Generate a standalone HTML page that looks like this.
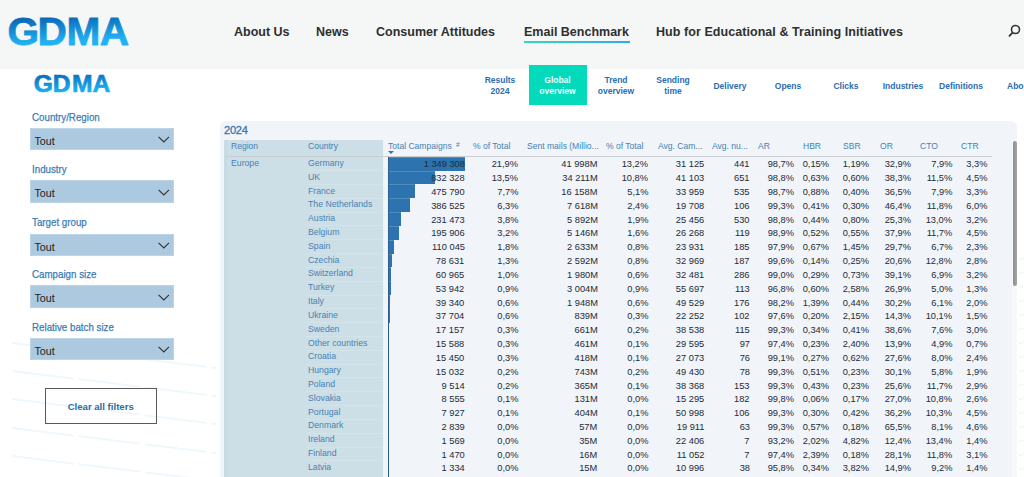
<!DOCTYPE html>
<html><head><meta charset="utf-8"><title>GDMA Email Benchmark</title>
<style>
html,body{margin:0;padding:0}
body{width:1024px;height:477px;overflow:hidden;position:relative;background:#fff;font-family:"Liberation Sans",sans-serif}
.abs,.th,.v,.ct,.bar,.flabel,.dd,.tab,.nav{position:absolute}
#hdr{position:absolute;left:0;top:0;width:1024px;height:68.6px;background:#f5f6f6}
.nav{top:25px;font-weight:bold;font-size:12.5px;color:#2f2f2f;white-space:nowrap;line-height:15px}
.logo{position:absolute;font-weight:bold;white-space:nowrap}
.tab{font-weight:bold;font-size:8.5px;line-height:10.6px;color:#2b6db1;text-align:center;white-space:nowrap}
#panel{position:absolute;left:219.9px;top:120.7px;width:797.1px;height:370px;background:#f1f4f8;border-radius:6px}
#rc{position:absolute;left:223.6px;top:139.9px;width:159.5px;border-right:1px solid #eef3f7;height:340px;background:linear-gradient(90deg,#c8dbe4 0,#c8dbe4 3px,#cddfe6 4px)}
.th{top:138.7px;font-size:8.55px;line-height:14px;color:#4682b4;white-space:nowrap}
.v{font-size:9.9px;line-height:13.8px;margin-top:0.8px;transform:scaleX(0.94);transform-origin:100% 50%;color:#222c38;white-space:nowrap;text-align:right}
.ct{left:308px;font-size:8.7px;line-height:12px;margin-top:0.3px;color:#4682b4;white-space:nowrap}
.bar{left:388px;height:13.82px;background:#2c73af;box-sizing:border-box;border-top:0.5px solid rgba(255,255,255,0.18)}
.flabel{left:32px;font-size:11px;line-height:12px;color:#3b7bb3;-webkit-text-stroke:0.25px #3b7bb3;transform:scaleX(0.887);transform-origin:0 50%;white-space:nowrap}
.dd{left:29.7px;width:144.2px;height:22.5px;background:#adc9e0;box-sizing:border-box;border:1px solid #bdd4e6}
.dd span{position:absolute;left:3.8px;top:5px;font-size:10.7px;line-height:15px;color:#222}
.dd svg{position:absolute;left:127.6px;top:7.2px}
</style></head><body>
<div id="hdr"></div>
<svg class="abs" style="left:0;top:0" width="1024" height="477"><g fill="none" stroke="#edf7fc" stroke-width="1.8" stroke-dasharray="62 5"><path d="M12 343 L216 368"/><path d="M12 371 L216 396"/><path d="M12 399 L216 424"/><path d="M12 428 L216 453"/><path d="M12 456 L216 481"/><path d="M1019 259.5 L1024 258"/><path d="M1019 273.5 L1024 272"/><path d="M1019 287.5 L1024 286"/><path d="M1019 301.5 L1024 300"/><path d="M1019 315.5 L1024 314"/><path d="M1019 329.5 L1024 328"/><path d="M1019 343.5 L1024 342"/><path d="M1019 357.5 L1024 356"/><path d="M1019 371.5 L1024 370"/><path d="M1019 385.5 L1024 384"/><path d="M1019 399.5 L1024 398"/><path d="M1019 413.5 L1024 412"/><path d="M1019 427.5 L1024 426"/><path d="M1019 441.5 L1024 440"/><path d="M1019 455.5 L1024 454"/><path d="M1019 469.5 L1024 468"/></g></svg>
<svg class="abs" style="left:0;top:0;overflow:visible" width="131" height="49"><defs><linearGradient id="lg1" x1="0" y1="0" x2="0.15" y2="1"><stop offset="0.24" stop-color="#0a69b9"/><stop offset="0.8" stop-color="#1fb2f2"/></linearGradient></defs><text font-family="Liberation Sans, sans-serif" font-weight="bold" font-size="38.70" fill="url(#lg1)" stroke="url(#lg1)" stroke-width="0.8" stroke-linejoin="round" transform="translate(0,44.60) scale(1.05,1)" x="7.06 35.68 63.37 95.12" y="0">GDMA</text></svg>
<div class="nav" style="left:234px">About Us</div>
<div class="nav" style="left:316px">News</div>
<div class="nav" style="left:376px">Consumer Attitudes</div>
<div class="nav" style="left:524px">Email Benchmark</div>
<div class="abs" style="left:524px;top:41.2px;width:105.5px;height:1.7px;background:linear-gradient(90deg,#36d8b8,#2eaaf4)"></div>
<div class="nav" style="left:656px;letter-spacing:0.06px">Hub for Educational &amp; Training Initiatives</div>
<svg class="abs" style="left:1006px;top:23px" width="16" height="16" viewBox="0 0 16 16"><circle cx="9.5" cy="6.5" r="4" fill="none" stroke="#333" stroke-width="1.6"/><path d="M6.6 9.6 L3 13.4" stroke="#333" stroke-width="1.8" fill="none"/></svg>

<svg class="abs" style="left:0;top:0;overflow:visible" width="112" height="97"><defs><linearGradient id="lg2" x1="0" y1="0" x2="0.15" y2="1"><stop offset="0.24" stop-color="#0b72c2"/><stop offset="0.8" stop-color="#19aef0"/></linearGradient></defs><text font-family="Liberation Sans, sans-serif" font-weight="bold" font-size="24.64" fill="url(#lg2)" stroke="url(#lg2)" stroke-width="0.7" stroke-linejoin="round" transform="translate(0,92.35) scale(1.0,1)" x="33.80 52.82 71.88 92.53" y="0">GDMA</text></svg>

<div class="abs" style="left:528.8px;top:64.8px;width:58px;height:40.1px;background:#02dabb"></div>
<div class="tab" style="left:470px;width:60px;top:75.1px">Results<br>2024</div>
<div class="tab" style="left:528.5px;width:58px;top:75.1px;color:#e8fffa">Global<br>overview</div>
<div class="tab" style="left:586px;width:60px;top:75.1px">Trend<br>overview</div>
<div class="tab" style="left:643px;width:60px;top:75.1px">Sending<br>time</div>
<div class="tab" style="left:700px;width:60px;top:80.8px">Delivery</div>
<div class="tab" style="left:758px;width:60px;top:80.8px">Opens</div>
<div class="tab" style="left:816px;width:60px;top:80.8px">Clicks</div>
<div class="tab" style="left:873px;width:60px;top:80.8px">Industries</div>
<div class="tab" style="left:931px;width:60px;top:80.8px">Definitions</div>
<div class="tab" style="left:1007px;top:80.8px;text-align:left">About</div>

<div class="flabel" style="top:110.6px">Country/Region</div>
<div class="dd" style="top:128.1px;height:22.3px"><span>Tout</span><svg width="12" height="8" viewBox="0 0 12 8"><path d="M0.6 0.8 L5.8 6 L11 0.8" fill="none" stroke="#333" stroke-width="1.1"/></svg></div>
<div class="flabel" style="top:163.4px">Industry</div>
<div class="dd" style="top:180.4px;height:22.2px"><span>Tout</span><svg width="12" height="8" viewBox="0 0 12 8"><path d="M0.6 0.8 L5.8 6 L11 0.8" fill="none" stroke="#333" stroke-width="1.1"/></svg></div>
<div class="flabel" style="top:215.6px">Target group</div>
<div class="dd" style="top:233.7px;height:22.2px"><span>Tout</span><svg width="12" height="8" viewBox="0 0 12 8"><path d="M0.6 0.8 L5.8 6 L11 0.8" fill="none" stroke="#333" stroke-width="1.1"/></svg></div>
<div class="flabel" style="top:267.9px">Campaign size</div>
<div class="dd" style="top:285.4px;height:22.2px"><span>Tout</span><svg width="12" height="8" viewBox="0 0 12 8"><path d="M0.6 0.8 L5.8 6 L11 0.8" fill="none" stroke="#333" stroke-width="1.1"/></svg></div>
<div class="flabel" style="top:320.7px">Relative batch size</div>
<div class="dd" style="top:338.2px;height:22.2px"><span>Tout</span><svg width="12" height="8" viewBox="0 0 12 8"><path d="M0.6 0.8 L5.8 6 L11 0.8" fill="none" stroke="#333" stroke-width="1.1"/></svg></div>
<div class="abs" style="left:44.5px;top:387.7px;width:112.4px;height:36.6px;box-sizing:border-box;border:1px solid #5a5a5a"></div>
<div class="tab" style="left:44.5px;width:112.4px;top:401px;font-size:9.6px;line-height:12px;color:#2b6cab">Clear all filters</div>

<div id="panel"></div>
<div class="abs" style="left:224px;top:123px;font-size:11.1px;line-height:14px;letter-spacing:-0.25px;color:#3877b2;-webkit-text-stroke:0.3px #3877b2">2024</div>
<div id="rc"></div>
<div class="abs" style="left:224.5px;top:156px;width:767.5px;height:1px;background:#c9cdd2"></div>
<div class="abs" style="left:231px;top:157.2px;font-size:8.7px;line-height:12px;color:#4682b4">Europe</div>
<div class="th" style="left:231px">Region</div>
<div class="th" style="left:308px">Country</div>
<div class="th" style="left:388px">Total Campaigns</div>
<div class="th" style="left:473px">% of Total</div>
<div class="th" style="left:527px">Sent mails (Millio...</div>
<div class="th" style="left:606px">% of Total</div>
<div class="th" style="left:658px">Avg. Cam...</div>
<div class="th" style="left:712px">Avg. nu...</div>
<div class="th" style="left:758px">AR</div>
<div class="th" style="left:803px">HBR</div>
<div class="th" style="left:843px">SBR</div>
<div class="th" style="left:880px">OR</div>
<div class="th" style="left:920px">CTO</div>
<div class="th" style="left:961px">CTR</div>
<div class="th hash" style="left:456px;font-size:6.5px;top:138px">#</div>
<div class="abs" style="left:388.2px;top:151.3px;width:0;height:0;border-left:3.1px solid transparent;border-right:3.1px solid transparent;border-top:3.4px solid #2e75b5"></div>
<div class="bar" style="top:156.80px;width:76.50px"></div>
<div class="ct" style="top:156.60px">Germany</div>
<div class="v" style="top:156.60px;right:559.5px">1 349 308</div>
<div class="v" style="top:156.60px;right:505.5px">21,9%</div>
<div class="v" style="top:156.60px;right:426.5px">41 998M</div>
<div class="v" style="top:156.60px;right:375.5px">13,2%</div>
<div class="v" style="top:156.60px;right:319.5px">31 125</div>
<div class="v" style="top:156.60px;right:274.5px">441</div>
<div class="v" style="top:156.60px;right:229.5px">98,7%</div>
<div class="v" style="top:156.60px;right:194.5px">0,15%</div>
<div class="v" style="top:156.60px;right:154.5px">1,19%</div>
<div class="v" style="top:156.60px;right:112.5px">32,9%</div>
<div class="v" style="top:156.60px;right:71.5px">7,9%</div>
<div class="v" style="top:156.60px;right:36.5px">3,3%</div>
<div class="bar" style="top:170.62px;width:47.19px"></div>
<div class="abs" style="left:306px;top:170.12px;width:77px;height:0.7px;background:rgba(255,255,255,0.13)"></div>
<div class="ct" style="top:170.42px">UK</div>
<div class="v" style="top:170.42px;right:559.5px">832 328</div>
<div class="v" style="top:170.42px;right:505.5px">13,5%</div>
<div class="v" style="top:170.42px;right:426.5px">34 211M</div>
<div class="v" style="top:170.42px;right:375.5px">10,8%</div>
<div class="v" style="top:170.42px;right:319.5px">41 103</div>
<div class="v" style="top:170.42px;right:274.5px">651</div>
<div class="v" style="top:170.42px;right:229.5px">98,8%</div>
<div class="v" style="top:170.42px;right:194.5px">0,63%</div>
<div class="v" style="top:170.42px;right:154.5px">0,60%</div>
<div class="v" style="top:170.42px;right:112.5px">38,3%</div>
<div class="v" style="top:170.42px;right:71.5px">11,5%</div>
<div class="v" style="top:170.42px;right:36.5px">4,5%</div>
<div class="bar" style="top:184.44px;width:26.98px"></div>
<div class="abs" style="left:306px;top:183.94px;width:77px;height:0.7px;background:rgba(255,255,255,0.13)"></div>
<div class="ct" style="top:184.24px">France</div>
<div class="v" style="top:184.24px;right:559.5px">475 790</div>
<div class="v" style="top:184.24px;right:505.5px">7,7%</div>
<div class="v" style="top:184.24px;right:426.5px">16 158M</div>
<div class="v" style="top:184.24px;right:375.5px">5,1%</div>
<div class="v" style="top:184.24px;right:319.5px">33 959</div>
<div class="v" style="top:184.24px;right:274.5px">535</div>
<div class="v" style="top:184.24px;right:229.5px">98,7%</div>
<div class="v" style="top:184.24px;right:194.5px">0,88%</div>
<div class="v" style="top:184.24px;right:154.5px">0,40%</div>
<div class="v" style="top:184.24px;right:112.5px">36,5%</div>
<div class="v" style="top:184.24px;right:71.5px">7,9%</div>
<div class="v" style="top:184.24px;right:36.5px">3,3%</div>
<div class="bar" style="top:198.26px;width:21.91px"></div>
<div class="abs" style="left:306px;top:197.76px;width:77px;height:0.7px;background:rgba(255,255,255,0.13)"></div>
<div class="ct" style="top:198.06px">The Netherlands</div>
<div class="v" style="top:198.06px;right:559.5px">386 525</div>
<div class="v" style="top:198.06px;right:505.5px">6,3%</div>
<div class="v" style="top:198.06px;right:426.5px">7 618M</div>
<div class="v" style="top:198.06px;right:375.5px">2,4%</div>
<div class="v" style="top:198.06px;right:319.5px">19 708</div>
<div class="v" style="top:198.06px;right:274.5px">106</div>
<div class="v" style="top:198.06px;right:229.5px">99,3%</div>
<div class="v" style="top:198.06px;right:194.5px">0,41%</div>
<div class="v" style="top:198.06px;right:154.5px">0,30%</div>
<div class="v" style="top:198.06px;right:112.5px">46,4%</div>
<div class="v" style="top:198.06px;right:71.5px">11,8%</div>
<div class="v" style="top:198.06px;right:36.5px">6,0%</div>
<div class="bar" style="top:212.08px;width:13.12px"></div>
<div class="abs" style="left:306px;top:211.58px;width:77px;height:0.7px;background:rgba(255,255,255,0.13)"></div>
<div class="ct" style="top:211.88px">Austria</div>
<div class="v" style="top:211.88px;right:559.5px">231 473</div>
<div class="v" style="top:211.88px;right:505.5px">3,8%</div>
<div class="v" style="top:211.88px;right:426.5px">5 892M</div>
<div class="v" style="top:211.88px;right:375.5px">1,9%</div>
<div class="v" style="top:211.88px;right:319.5px">25 456</div>
<div class="v" style="top:211.88px;right:274.5px">530</div>
<div class="v" style="top:211.88px;right:229.5px">98,8%</div>
<div class="v" style="top:211.88px;right:194.5px">0,44%</div>
<div class="v" style="top:211.88px;right:154.5px">0,80%</div>
<div class="v" style="top:211.88px;right:112.5px">25,3%</div>
<div class="v" style="top:211.88px;right:71.5px">13,0%</div>
<div class="v" style="top:211.88px;right:36.5px">3,2%</div>
<div class="bar" style="top:225.90px;width:11.11px"></div>
<div class="abs" style="left:306px;top:225.40px;width:77px;height:0.7px;background:rgba(255,255,255,0.13)"></div>
<div class="ct" style="top:225.70px">Belgium</div>
<div class="v" style="top:225.70px;right:559.5px">195 906</div>
<div class="v" style="top:225.70px;right:505.5px">3,2%</div>
<div class="v" style="top:225.70px;right:426.5px">5 146M</div>
<div class="v" style="top:225.70px;right:375.5px">1,6%</div>
<div class="v" style="top:225.70px;right:319.5px">26 268</div>
<div class="v" style="top:225.70px;right:274.5px">119</div>
<div class="v" style="top:225.70px;right:229.5px">98,9%</div>
<div class="v" style="top:225.70px;right:194.5px">0,52%</div>
<div class="v" style="top:225.70px;right:154.5px">0,55%</div>
<div class="v" style="top:225.70px;right:112.5px">37,9%</div>
<div class="v" style="top:225.70px;right:71.5px">11,7%</div>
<div class="v" style="top:225.70px;right:36.5px">4,5%</div>
<div class="bar" style="top:239.72px;width:6.24px"></div>
<div class="abs" style="left:306px;top:239.22px;width:77px;height:0.7px;background:rgba(255,255,255,0.13)"></div>
<div class="ct" style="top:239.52px">Spain</div>
<div class="v" style="top:239.52px;right:559.5px">110 045</div>
<div class="v" style="top:239.52px;right:505.5px">1,8%</div>
<div class="v" style="top:239.52px;right:426.5px">2 633M</div>
<div class="v" style="top:239.52px;right:375.5px">0,8%</div>
<div class="v" style="top:239.52px;right:319.5px">23 931</div>
<div class="v" style="top:239.52px;right:274.5px">185</div>
<div class="v" style="top:239.52px;right:229.5px">97,9%</div>
<div class="v" style="top:239.52px;right:194.5px">0,67%</div>
<div class="v" style="top:239.52px;right:154.5px">1,45%</div>
<div class="v" style="top:239.52px;right:112.5px">29,7%</div>
<div class="v" style="top:239.52px;right:71.5px">6,7%</div>
<div class="v" style="top:239.52px;right:36.5px">2,3%</div>
<div class="bar" style="top:253.54px;width:4.46px"></div>
<div class="abs" style="left:306px;top:253.04px;width:77px;height:0.7px;background:rgba(255,255,255,0.13)"></div>
<div class="ct" style="top:253.34px">Czechia</div>
<div class="v" style="top:253.34px;right:559.5px">78 631</div>
<div class="v" style="top:253.34px;right:505.5px">1,3%</div>
<div class="v" style="top:253.34px;right:426.5px">2 592M</div>
<div class="v" style="top:253.34px;right:375.5px">0,8%</div>
<div class="v" style="top:253.34px;right:319.5px">32 969</div>
<div class="v" style="top:253.34px;right:274.5px">187</div>
<div class="v" style="top:253.34px;right:229.5px">99,6%</div>
<div class="v" style="top:253.34px;right:194.5px">0,14%</div>
<div class="v" style="top:253.34px;right:154.5px">0,25%</div>
<div class="v" style="top:253.34px;right:112.5px">20,6%</div>
<div class="v" style="top:253.34px;right:71.5px">12,8%</div>
<div class="v" style="top:253.34px;right:36.5px">2,8%</div>
<div class="bar" style="top:267.36px;width:3.46px"></div>
<div class="abs" style="left:306px;top:266.86px;width:77px;height:0.7px;background:rgba(255,255,255,0.13)"></div>
<div class="ct" style="top:267.16px">Switzerland</div>
<div class="v" style="top:267.16px;right:559.5px">60 965</div>
<div class="v" style="top:267.16px;right:505.5px">1,0%</div>
<div class="v" style="top:267.16px;right:426.5px">1 980M</div>
<div class="v" style="top:267.16px;right:375.5px">0,6%</div>
<div class="v" style="top:267.16px;right:319.5px">32 481</div>
<div class="v" style="top:267.16px;right:274.5px">286</div>
<div class="v" style="top:267.16px;right:229.5px">99,0%</div>
<div class="v" style="top:267.16px;right:194.5px">0,29%</div>
<div class="v" style="top:267.16px;right:154.5px">0,73%</div>
<div class="v" style="top:267.16px;right:112.5px">39,1%</div>
<div class="v" style="top:267.16px;right:71.5px">6,9%</div>
<div class="v" style="top:267.16px;right:36.5px">3,2%</div>
<div class="bar" style="top:281.18px;width:3.06px"></div>
<div class="abs" style="left:306px;top:280.68px;width:77px;height:0.7px;background:rgba(255,255,255,0.13)"></div>
<div class="ct" style="top:280.98px">Turkey</div>
<div class="v" style="top:280.98px;right:559.5px">53 942</div>
<div class="v" style="top:280.98px;right:505.5px">0,9%</div>
<div class="v" style="top:280.98px;right:426.5px">3 004M</div>
<div class="v" style="top:280.98px;right:375.5px">0,9%</div>
<div class="v" style="top:280.98px;right:319.5px">55 697</div>
<div class="v" style="top:280.98px;right:274.5px">113</div>
<div class="v" style="top:280.98px;right:229.5px">96,8%</div>
<div class="v" style="top:280.98px;right:194.5px">0,60%</div>
<div class="v" style="top:280.98px;right:154.5px">2,58%</div>
<div class="v" style="top:280.98px;right:112.5px">26,9%</div>
<div class="v" style="top:280.98px;right:71.5px">5,0%</div>
<div class="v" style="top:280.98px;right:36.5px">1,3%</div>
<div class="bar" style="top:295.00px;width:2.23px"></div>
<div class="abs" style="left:306px;top:294.50px;width:77px;height:0.7px;background:rgba(255,255,255,0.13)"></div>
<div class="ct" style="top:294.80px">Italy</div>
<div class="v" style="top:294.80px;right:559.5px">39 340</div>
<div class="v" style="top:294.80px;right:505.5px">0,6%</div>
<div class="v" style="top:294.80px;right:426.5px">1 948M</div>
<div class="v" style="top:294.80px;right:375.5px">0,6%</div>
<div class="v" style="top:294.80px;right:319.5px">49 529</div>
<div class="v" style="top:294.80px;right:274.5px">176</div>
<div class="v" style="top:294.80px;right:229.5px">98,2%</div>
<div class="v" style="top:294.80px;right:194.5px">1,39%</div>
<div class="v" style="top:294.80px;right:154.5px">0,44%</div>
<div class="v" style="top:294.80px;right:112.5px">30,2%</div>
<div class="v" style="top:294.80px;right:71.5px">6,1%</div>
<div class="v" style="top:294.80px;right:36.5px">2,0%</div>
<div class="bar" style="top:308.82px;width:2.14px"></div>
<div class="abs" style="left:306px;top:308.32px;width:77px;height:0.7px;background:rgba(255,255,255,0.13)"></div>
<div class="ct" style="top:308.62px">Ukraine</div>
<div class="v" style="top:308.62px;right:559.5px">37 704</div>
<div class="v" style="top:308.62px;right:505.5px">0,6%</div>
<div class="v" style="top:308.62px;right:426.5px">839M</div>
<div class="v" style="top:308.62px;right:375.5px">0,3%</div>
<div class="v" style="top:308.62px;right:319.5px">22 252</div>
<div class="v" style="top:308.62px;right:274.5px">102</div>
<div class="v" style="top:308.62px;right:229.5px">97,6%</div>
<div class="v" style="top:308.62px;right:194.5px">0,20%</div>
<div class="v" style="top:308.62px;right:154.5px">2,15%</div>
<div class="v" style="top:308.62px;right:112.5px">14,3%</div>
<div class="v" style="top:308.62px;right:71.5px">10,1%</div>
<div class="v" style="top:308.62px;right:36.5px">1,5%</div>
<div class="bar" style="top:322.64px;width:0.97px"></div>
<div class="abs" style="left:306px;top:322.14px;width:77px;height:0.7px;background:rgba(255,255,255,0.13)"></div>
<div class="ct" style="top:322.44px">Sweden</div>
<div class="v" style="top:322.44px;right:559.5px">17 157</div>
<div class="v" style="top:322.44px;right:505.5px">0,3%</div>
<div class="v" style="top:322.44px;right:426.5px">661M</div>
<div class="v" style="top:322.44px;right:375.5px">0,2%</div>
<div class="v" style="top:322.44px;right:319.5px">38 538</div>
<div class="v" style="top:322.44px;right:274.5px">115</div>
<div class="v" style="top:322.44px;right:229.5px">99,3%</div>
<div class="v" style="top:322.44px;right:194.5px">0,34%</div>
<div class="v" style="top:322.44px;right:154.5px">0,41%</div>
<div class="v" style="top:322.44px;right:112.5px">38,6%</div>
<div class="v" style="top:322.44px;right:71.5px">7,6%</div>
<div class="v" style="top:322.44px;right:36.5px">3,0%</div>
<div class="bar" style="top:336.46px;width:0.88px"></div>
<div class="abs" style="left:306px;top:335.96px;width:77px;height:0.7px;background:rgba(255,255,255,0.13)"></div>
<div class="ct" style="top:336.26px">Other countries</div>
<div class="v" style="top:336.26px;right:559.5px">15 588</div>
<div class="v" style="top:336.26px;right:505.5px">0,3%</div>
<div class="v" style="top:336.26px;right:426.5px">461M</div>
<div class="v" style="top:336.26px;right:375.5px">0,1%</div>
<div class="v" style="top:336.26px;right:319.5px">29 595</div>
<div class="v" style="top:336.26px;right:274.5px">97</div>
<div class="v" style="top:336.26px;right:229.5px">97,4%</div>
<div class="v" style="top:336.26px;right:194.5px">0,23%</div>
<div class="v" style="top:336.26px;right:154.5px">2,40%</div>
<div class="v" style="top:336.26px;right:112.5px">13,9%</div>
<div class="v" style="top:336.26px;right:71.5px">4,9%</div>
<div class="v" style="top:336.26px;right:36.5px">0,7%</div>
<div class="bar" style="top:350.28px;width:0.88px"></div>
<div class="abs" style="left:306px;top:349.78px;width:77px;height:0.7px;background:rgba(255,255,255,0.13)"></div>
<div class="ct" style="top:350.08px">Croatia</div>
<div class="v" style="top:350.08px;right:559.5px">15 450</div>
<div class="v" style="top:350.08px;right:505.5px">0,3%</div>
<div class="v" style="top:350.08px;right:426.5px">418M</div>
<div class="v" style="top:350.08px;right:375.5px">0,1%</div>
<div class="v" style="top:350.08px;right:319.5px">27 073</div>
<div class="v" style="top:350.08px;right:274.5px">76</div>
<div class="v" style="top:350.08px;right:229.5px">99,1%</div>
<div class="v" style="top:350.08px;right:194.5px">0,27%</div>
<div class="v" style="top:350.08px;right:154.5px">0,62%</div>
<div class="v" style="top:350.08px;right:112.5px">27,6%</div>
<div class="v" style="top:350.08px;right:71.5px">8,0%</div>
<div class="v" style="top:350.08px;right:36.5px">2,4%</div>
<div class="bar" style="top:364.10px;width:0.85px"></div>
<div class="abs" style="left:306px;top:363.60px;width:77px;height:0.7px;background:rgba(255,255,255,0.13)"></div>
<div class="ct" style="top:363.90px">Hungary</div>
<div class="v" style="top:363.90px;right:559.5px">15 032</div>
<div class="v" style="top:363.90px;right:505.5px">0,2%</div>
<div class="v" style="top:363.90px;right:426.5px">743M</div>
<div class="v" style="top:363.90px;right:375.5px">0,2%</div>
<div class="v" style="top:363.90px;right:319.5px">49 430</div>
<div class="v" style="top:363.90px;right:274.5px">78</div>
<div class="v" style="top:363.90px;right:229.5px">99,3%</div>
<div class="v" style="top:363.90px;right:194.5px">0,51%</div>
<div class="v" style="top:363.90px;right:154.5px">0,23%</div>
<div class="v" style="top:363.90px;right:112.5px">30,1%</div>
<div class="v" style="top:363.90px;right:71.5px">5,8%</div>
<div class="v" style="top:363.90px;right:36.5px">1,9%</div>
<div class="bar" style="top:377.92px;width:0.54px"></div>
<div class="abs" style="left:306px;top:377.42px;width:77px;height:0.7px;background:rgba(255,255,255,0.13)"></div>
<div class="ct" style="top:377.72px">Poland</div>
<div class="v" style="top:377.72px;right:559.5px">9 514</div>
<div class="v" style="top:377.72px;right:505.5px">0,2%</div>
<div class="v" style="top:377.72px;right:426.5px">365M</div>
<div class="v" style="top:377.72px;right:375.5px">0,1%</div>
<div class="v" style="top:377.72px;right:319.5px">38 368</div>
<div class="v" style="top:377.72px;right:274.5px">153</div>
<div class="v" style="top:377.72px;right:229.5px">99,3%</div>
<div class="v" style="top:377.72px;right:194.5px">0,43%</div>
<div class="v" style="top:377.72px;right:154.5px">0,23%</div>
<div class="v" style="top:377.72px;right:112.5px">25,6%</div>
<div class="v" style="top:377.72px;right:71.5px">11,7%</div>
<div class="v" style="top:377.72px;right:36.5px">2,9%</div>
<div class="bar" style="top:391.74px;width:0.49px"></div>
<div class="abs" style="left:306px;top:391.24px;width:77px;height:0.7px;background:rgba(255,255,255,0.13)"></div>
<div class="ct" style="top:391.54px">Slovakia</div>
<div class="v" style="top:391.54px;right:559.5px">8 555</div>
<div class="v" style="top:391.54px;right:505.5px">0,1%</div>
<div class="v" style="top:391.54px;right:426.5px">131M</div>
<div class="v" style="top:391.54px;right:375.5px">0,0%</div>
<div class="v" style="top:391.54px;right:319.5px">15 295</div>
<div class="v" style="top:391.54px;right:274.5px">182</div>
<div class="v" style="top:391.54px;right:229.5px">99,8%</div>
<div class="v" style="top:391.54px;right:194.5px">0,06%</div>
<div class="v" style="top:391.54px;right:154.5px">0,17%</div>
<div class="v" style="top:391.54px;right:112.5px">27,0%</div>
<div class="v" style="top:391.54px;right:71.5px">10,8%</div>
<div class="v" style="top:391.54px;right:36.5px">2,6%</div>
<div class="bar" style="top:405.56px;width:0.45px"></div>
<div class="abs" style="left:306px;top:405.06px;width:77px;height:0.7px;background:rgba(255,255,255,0.13)"></div>
<div class="ct" style="top:405.36px">Portugal</div>
<div class="v" style="top:405.36px;right:559.5px">7 927</div>
<div class="v" style="top:405.36px;right:505.5px">0,1%</div>
<div class="v" style="top:405.36px;right:426.5px">404M</div>
<div class="v" style="top:405.36px;right:375.5px">0,1%</div>
<div class="v" style="top:405.36px;right:319.5px">50 998</div>
<div class="v" style="top:405.36px;right:274.5px">106</div>
<div class="v" style="top:405.36px;right:229.5px">99,3%</div>
<div class="v" style="top:405.36px;right:194.5px">0,30%</div>
<div class="v" style="top:405.36px;right:154.5px">0,42%</div>
<div class="v" style="top:405.36px;right:112.5px">36,2%</div>
<div class="v" style="top:405.36px;right:71.5px">10,3%</div>
<div class="v" style="top:405.36px;right:36.5px">4,5%</div>
<div class="bar" style="top:419.38px;width:0.16px"></div>
<div class="abs" style="left:306px;top:418.88px;width:77px;height:0.7px;background:rgba(255,255,255,0.13)"></div>
<div class="ct" style="top:419.18px">Denmark</div>
<div class="v" style="top:419.18px;right:559.5px">2 839</div>
<div class="v" style="top:419.18px;right:505.5px">0,0%</div>
<div class="v" style="top:419.18px;right:426.5px">57M</div>
<div class="v" style="top:419.18px;right:375.5px">0,0%</div>
<div class="v" style="top:419.18px;right:319.5px">19 911</div>
<div class="v" style="top:419.18px;right:274.5px">63</div>
<div class="v" style="top:419.18px;right:229.5px">99,3%</div>
<div class="v" style="top:419.18px;right:194.5px">0,57%</div>
<div class="v" style="top:419.18px;right:154.5px">0,18%</div>
<div class="v" style="top:419.18px;right:112.5px">65,5%</div>
<div class="v" style="top:419.18px;right:71.5px">8,1%</div>
<div class="v" style="top:419.18px;right:36.5px">4,6%</div>
<div class="bar" style="top:433.20px;width:0.09px"></div>
<div class="abs" style="left:306px;top:432.70px;width:77px;height:0.7px;background:rgba(255,255,255,0.13)"></div>
<div class="ct" style="top:433.00px">Ireland</div>
<div class="v" style="top:433.00px;right:559.5px">1 569</div>
<div class="v" style="top:433.00px;right:505.5px">0,0%</div>
<div class="v" style="top:433.00px;right:426.5px">35M</div>
<div class="v" style="top:433.00px;right:375.5px">0,0%</div>
<div class="v" style="top:433.00px;right:319.5px">22 406</div>
<div class="v" style="top:433.00px;right:274.5px">7</div>
<div class="v" style="top:433.00px;right:229.5px">93,2%</div>
<div class="v" style="top:433.00px;right:194.5px">2,02%</div>
<div class="v" style="top:433.00px;right:154.5px">4,82%</div>
<div class="v" style="top:433.00px;right:112.5px">12,4%</div>
<div class="v" style="top:433.00px;right:71.5px">13,4%</div>
<div class="v" style="top:433.00px;right:36.5px">1,4%</div>
<div class="bar" style="top:447.02px;width:0.08px"></div>
<div class="abs" style="left:306px;top:446.52px;width:77px;height:0.7px;background:rgba(255,255,255,0.13)"></div>
<div class="ct" style="top:446.82px">Finland</div>
<div class="v" style="top:446.82px;right:559.5px">1 470</div>
<div class="v" style="top:446.82px;right:505.5px">0,0%</div>
<div class="v" style="top:446.82px;right:426.5px">16M</div>
<div class="v" style="top:446.82px;right:375.5px">0,0%</div>
<div class="v" style="top:446.82px;right:319.5px">11 052</div>
<div class="v" style="top:446.82px;right:274.5px">7</div>
<div class="v" style="top:446.82px;right:229.5px">97,4%</div>
<div class="v" style="top:446.82px;right:194.5px">2,39%</div>
<div class="v" style="top:446.82px;right:154.5px">0,18%</div>
<div class="v" style="top:446.82px;right:112.5px">28,1%</div>
<div class="v" style="top:446.82px;right:71.5px">11,8%</div>
<div class="v" style="top:446.82px;right:36.5px">3,1%</div>
<div class="bar" style="top:460.84px;width:0.08px"></div>
<div class="abs" style="left:306px;top:460.34px;width:77px;height:0.7px;background:rgba(255,255,255,0.13)"></div>
<div class="ct" style="top:460.64px">Latvia</div>
<div class="v" style="top:460.64px;right:559.5px">1 334</div>
<div class="v" style="top:460.64px;right:505.5px">0,0%</div>
<div class="v" style="top:460.64px;right:426.5px">15M</div>
<div class="v" style="top:460.64px;right:375.5px">0,0%</div>
<div class="v" style="top:460.64px;right:319.5px">10 996</div>
<div class="v" style="top:460.64px;right:274.5px">38</div>
<div class="v" style="top:460.64px;right:229.5px">95,8%</div>
<div class="v" style="top:460.64px;right:194.5px">0,34%</div>
<div class="v" style="top:460.64px;right:154.5px">3,82%</div>
<div class="v" style="top:460.64px;right:112.5px">14,9%</div>
<div class="v" style="top:460.64px;right:71.5px">9,2%</div>
<div class="v" style="top:460.64px;right:36.5px">1,4%</div>
<div class="abs" style="left:387.7px;top:157px;width:0.9px;height:330px;background:#2a5f94"></div>
<div class="abs" style="left:1011.8px;top:139px;width:5.6px;height:345px;background:#f6f8fa"></div>
<div class="abs" style="left:1012.8px;top:140.8px;width:4.2px;height:144.8px;background:linear-gradient(90deg,#8c8c8c,#a6a6a6);border-radius:2px"></div>
</body></html>
